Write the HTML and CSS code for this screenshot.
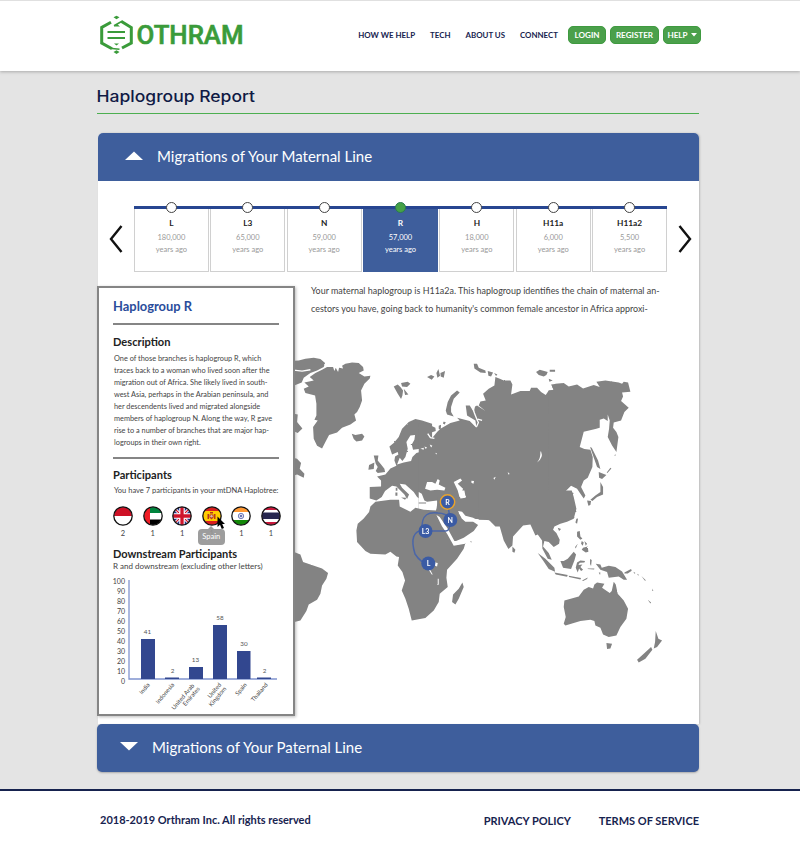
FILE: index.html
```html
<!DOCTYPE html>
<html lang="en">
<head>
<meta charset="utf-8">
<title>Haplogroup Report</title>
<link rel="stylesheet" href="styles.css">
</head>
<body>
<header class="top">
  <svg class="logo" width="146" height="40" viewBox="98 14 146 40">
    <g fill="none" stroke="#3a9b3a" stroke-width="3">
      <path d="M111 22.300L101.700 27.500V43L112 48.800"/>
      <path d="M121.500 21.500L131.300 27.500V43L122 48"/>
      <path d="M107.500 32H125M107.500 38H125" stroke-width="1.800"/>
      <path d="M114 25.800L122.500 21M119.500 49.300L112 48.500" stroke-width="1.600"/>
    </g>
    <path fill="#3a9b3a" d="M113.500 17.300L116.500 15.800 119.500 17.300 116.500 19.300ZM113.500 52L116.500 50.200 119.500 52 116.500 54ZM114 43.500h5l-2.500 2ZM114 26.500l3-2.500 3 2.500Z"/>
    <text class="logo-text" x="136.500" y="44" textLength="107" lengthAdjust="spacingAndGlyphs">OTHRAM</text>
  </svg>
  <nav class="nav">
    <a class="n1">HOW WE HELP</a><a class="n2">TECH</a><a class="n3">ABOUT US</a><a class="n4">CONNECT</a>
    <span class="btn b1">LOGIN</span><span class="btn b2">REGISTER</span><span class="btn b3">HELP <svg width="6" height="4"><path d="M0 0H6L3 3.500Z" fill="#fff"/></svg></span>
  </nav>
</header>
<main class="page">
  <h1 class="title"><svg width="170" height="24"><text x="-0.500" y="17" textLength="158.500" lengthAdjust="spacingAndGlyphs">Haplogroup Report</text></svg></h1>
  <section class="panel">
    <h2 class="bar"><svg width="18" height="9"><path d="M0 9L9 0.500 18 9Z" fill="#fff"/></svg>Migrations of Your Maternal Line</h2>
    <div class="timeline">
      <svg class="arrow" width="14" height="28"><path d="M12.500 1L2 14 12.500 27" fill="none" stroke="#111" stroke-width="2.400"/></svg>
      <ol class="steps">
        <li><i></i><b>L</b><span>180,000<br>years ago</span></li>
        <li><i></i><b>L3</b><span>65,000<br>years ago</span></li>
        <li><i></i><b>N</b><span>59,000<br>years ago</span></li>
        <li class="on"><i></i><b>R</b><span>57,000<br>years ago</span></li>
        <li><i></i><b>H</b><span>18,000<br>years ago</span></li>
        <li><i></i><b>H11a</b><span>6,000<br>years ago</span></li>
        <li><i></i><b>H11a2</b><span>5,500<br>years ago</span></li>
      </ol>
      <svg class="arrow" width="14" height="28"><path d="M1.500 1L12 14 1.500 27" fill="none" stroke="#111" stroke-width="2.400"/></svg>
    </div>
    <div class="content">
      <aside class="side">
        <h3 class="hap">Haplogroup R</h3>
        <h4 class="desc-h">Description</h4>
        <p class="desc">One of those branches is haplogroup R, which<br>traces back to a woman who lived soon after the<br>migration out of Africa. She likely lived in south-<br>west Asia, perhaps in the Arabian peninsula, and<br>her descendents lived and migrated alongside<br>members of haplogroup N. Along the way, R gave<br>rise to a number of branches that are major hap-<br>logroups in their own right.</p>
        <h4 class="part-h">Participants</h4>
        <p class="part">You have 7 participants in your mtDNA Haplotree:</p>
        <ul class="flags">
          <li><svg viewBox="0 0 20 20"><clipPath id="c"><circle cx="10" cy="10" r="9"/></clipPath><g clip-path="url(#c)"><path fill="#fff" d="M0 0H20V20H0Z"/><path fill="#ce1126" d="M0 0H20V10H0Z"/></g><circle class="ring" cx="10" cy="10" r="9.200"/></svg>2</li>
          <li><svg viewBox="0 0 20 20"><g clip-path="url(#c)"><path fill="#fff" d="M0 0H20V20H0Z"/><path fill="#00843d" d="M0 0H20V7H0Z"/><path d="M0 13.500H20V20H0Z"/><path fill="#ee1c25" d="M0 0H7V20H0Z"/></g><circle class="ring" cx="10" cy="10" r="9.200"/></svg>1</li>
          <li><svg viewBox="0 0 20 20"><g clip-path="url(#c)"><path fill="#26358c" d="M0 0H20V20H0Z"/><path stroke="#fff" stroke-width="3" d="M1 1L19 19M19 1L1 19"/><path stroke="#cf142b" stroke-width="1.200" d="M1 1L19 19M19 1L1 19"/><path stroke="#fff" stroke-width="5.500" d="M10 0V20M0 10H20"/><path stroke="#cf142b" stroke-width="3.300" d="M10 0V20M0 10H20"/></g><circle class="ring" cx="10" cy="10" r="9.200"/></svg>1</li>
          <li class="spain"><svg viewBox="0 0 20 20"><g clip-path="url(#c)"><path fill="#d81e1e" d="M0 0H20V20H0Z"/><path fill="#fc0" d="M0 5H20V15H0Z"/><path fill="#b5361f" d="M5.500 8h1.500v5H5.500zM12 8h1.500v5h-1.500zM8 6h3v1.500H8zM7.500 8.500h4v3l-2 2-2-2Z"/><circle cx="9.500" cy="10.300" r="1.200" fill="#d9b9b0"/></g><circle class="ring" cx="10" cy="10" r="9.200"/></svg>1<span class="tip">Spain</span><svg class="cursor" viewBox="0 0 8 14"><path d="M0.500 0.500V11L3 8.800 4.800 13 7 12 5.200 8H8Z"/></svg></li>
          <li><svg viewBox="0 0 20 20"><g clip-path="url(#c)"><path fill="#fff" d="M0 0H20V20H0Z"/><path fill="#f93" d="M0 0H20V6H0Z"/><path fill="#138808" d="M0 14H20V20H0Z"/></g><circle cx="10" cy="10" r="2.700" fill="#dde" stroke="#4250a0" stroke-width=".7"/><circle cx="10" cy="10" r="1" fill="#4250a0"/><circle class="ring" cx="10" cy="10" r="9.200"/></svg>1</li>
          <li><svg viewBox="0 0 20 20"><g clip-path="url(#c)"><path fill="#c8193c" d="M0 0H20V20H0Z"/><path fill="#fff" d="M0 4H20V16H0Z"/><path fill="#27274f" d="M0 6.500H20V13H0Z"/></g><circle class="ring" cx="10" cy="10" r="9.200"/></svg>1</li>
        </ul>
        <h4 class="down-h">Downstream Participants</h4>
        <p class="down">R and downstream (excluding other letters)</p>
        <svg class="chart" width="180" height="138" viewBox="110 574 180 138">
          <path fill="none" stroke="#8094cf" stroke-width="1.300" d="M129 581V680H277"/>
          <g fill="#32478f"><path d="M141 640h14v40h-14zM165 678.500h14v1.500h-14zM189 668h14v12h-14zM213 626h14v54h-14zM237 652h13.500v28h-13.500zM257 678.500h14v1.500h-14z"/></g>
          <g class="axis"><text x="125" y="585">100</text><text x="125" y="595">90</text><text x="125" y="605">80</text><text x="125" y="615">70</text><text x="125" y="625">60</text><text x="125" y="635">50</text><text x="125" y="645">40</text><text x="125" y="655">30</text><text x="125" y="665">20</text><text x="125" y="675">10</text><text x="125" y="685">0</text></g>
          <g class="vals"><text x="147.500" y="634.500">41</text><text x="172.500" y="673.500">2</text><text x="195.500" y="663">13</text><text x="220" y="621">58</text><text x="244" y="647">30</text><text x="264.500" y="673.500">2</text></g>
          <g class="cats">
            <text transform="translate(149 685) rotate(-50)">India</text>
            <text transform="translate(173.500 685) rotate(-50)">Indonesia</text>
            <text transform="translate(193.500 686) rotate(-50)">United Arab</text>
            <text transform="translate(199 689) rotate(-50)">Emirates</text>
            <text transform="translate(220.500 685) rotate(-50)">United</text>
            <text transform="translate(225.500 689) rotate(-50)">Kingdom</text>
            <text transform="translate(246 685) rotate(-50)">Spain</text>
            <text transform="translate(267 685) rotate(-50)">Thailand</text>
          </g>
        </svg>
      </aside>
      <div class="right">
        <p class="intro"><span>Your maternal haplogroup is H11a2a. This haplogroup identifies the chain of maternal an-</span><br><span>cestors you have, going back to humanity's common female ancestor in Africa approxi-</span></p>
        <svg class="map" width="404" height="330" viewBox="295 340 404 330">
          <defs><filter id="coast" x="0" y="0" width="100%" height="100%"><feTurbulence type="fractalNoise" baseFrequency="0.3" numOctaves="1" seed="4"/><feDisplacementMap in="SourceGraphic" scale="1.7" xChannelSelector="R" yChannelSelector="G"/></filter></defs>
          <g class="land" filter="url(#coast)">
            <g transform="translate(290.400 340.400) scale(.33333)">
              <path d="M0 62L25 60 45 55 70 52 90 56 104 68 100 80 80 90 60 98 40 112 34 126 0 140Z"/>
              <path class="sea-line" d="M10 89L35 92 60 88"/>
              <path d="M42 126L70 120 58 110 75 98 95 88 110 80 128 80 132 92 136 82 143 95 146 82 158 84 155 76 165 70 185 66 205 68 218 80 220 90 205 98 222 108 240 106 238 114 222 130 212 150 215 180 208 200 200 215 192 222 197 240 180 252 155 262 140 276 116 284 105 305 95 324 80 316 70 295 68 260 82 240 72 238 78 225 78 190 74 165 45 158 40 145 55 138Z"/>
              <path d="M0 218L22 222 20 245 36 264 22 278 0 268ZM0 350L20 355 32 368 28 385 42 400 40 412 20 402 0 408Z"/>
              <path d="M184 280L195 284 215 280 222 288 215 300 198 303 190 296Z"/>
              <path d="M310 138L322 132 330 140 338 150 336 165 332 176 322 160ZM332 128L352 124 360 130 350 140 335 138ZM340 145L354 162 344 164Z"/>
              <path d="M250 345L264 345 262 360 272 372 282 385 284 395 262 398 256 392 262 380 256 370ZM236 374L252 366 250 386 234 388Z"/>
              <path d="M425 250L425 450 400 455 388 460 392 478 380 470 370 455 345 432 328 430 335 442 356 462 350 476 342 462 318 438 305 436 284 452 274 470 258 480 238 474 238 440 272 438 272 420 260 408 285 402 300 384 318 376 312 360 314 348 324 342 322 335 305 342 297 318 310 308 325 290 335 265 355 245 375 236 395 240Z"/>
              <path d="M398 456L425 452V478L402 476ZM316 442h5v9h-5zM315 456h6v10h-6zM332 471l16 1-4 6z"/>
              <path class="sea" d="M345 350L352 325 348 305 360 285 374 284 372 298 364 312 368 328 390 325 412 320 400 332 378 338 366 350 362 362 340 366 320 372 328 352 336 362Z"/>
            </g>
            <g transform="translate(420.400 340.400) scale(.33333)">
              <path d="M-5 248L20 250 45 262 46 272 22 280 36 292 50 275 60 265 90 248 118 240 110 232 148 242 168 262 165 240 140 225 136 195 148 195 160 215 164 198 170 195 195 212 175 195 180 183 196 180 188 160 205 145 222 135 225 110 240 116 250 120 270 120 276 132 272 162 300 152 328 152 332 142 350 142 362 155 376 164 385 150 400 150 395 138 405 130 425 130V515H-5Z"/>
              <path class="sea" d="M14 445L20 425 35 425 45 430 52 416 58 420 55 432 75 442 72 450 50 448 30 450ZM100 425L120 414 125 420 112 430 128 445 124 455 137 468 134 476 118 472 112 450ZM-5 455L4 460 12 480 20 484 50 480 52 498 45 515H-5ZM362 333Q370 352 350 366 361 354 360 333ZM153 421l8 1-2 8-6-3zM219 413l7-4-4 9zM262 395l6 6-4 1zM0 325l10-3 0 6zM12 318l8 3-4 5zM28 312l8 4-4 5zM45 337l5 2-3 3z"/>
              <path class="sea-line" d="M156 198L162 218 170 238 174 246 168 260M172 236L185 240M22 280L30 292 42 294"/>
              <path d="M110 150L118 156 100 175 92 200 92 215 100 228 80 222 76 210 82 185 92 165ZM160 70L170 70 175 82 195 90 196 98 180 96 162 84ZM202 92L218 96 212 108 204 106ZM347 95L358 88 382 95 378 104 370 108 355 104ZM388 88h16v6h-16zM385 115l12 5-10 4zM20 110l12-6 10 4-8 10zM48 98l6-12 5 20-8 6zM60 98l14-6-4 20-9-4zM55 256l7-3-1 15-6-3zM69 244l7 1-3 7-5-2zM221 98l10 4-4 5z"/>
            </g>
            <g transform="translate(550.400 340.400) scale(.33333)">
              <path d="M-5 150L10 148 2 132 40 128 55 138 80 132 98 144 130 134 148 140 138 124 165 120 205 126 215 130 220 124 233 126 240 154 215 156 218 168 212 182 235 202 222 215 212 240 190 246 188 262 198 275 204 290 198 335 185 315 172 290 176 265 178 240 172 222 172 242 160 234 148 238 148 262 135 266 100 274 88 320 102 326 120 328 127 350 126 380 112 412 100 420 92 440 105 465 100 474 90 460 80 445 62 436 46 452 70 458 62 470 72 490 78 515H-5Z"/>
              <path d="M119 320L124 322 143 360 150 386 140 380ZM145 395L168 404 155 416 146 412ZM180 382l3 2-12 14-2-2zM150 425L158 440 158 462 140 470 126 482 120 478 135 465 150 455ZM110 480l12 2-2 12-6 2zM192 345l3-4 0 6z"/>
            </g>
            <g transform="translate(290.400 490.400) scale(.33333)">
              <path d="M0 180L30 192 38 215 60 222 95 234 113 248 108 265 95 285 90 310 80 328 55 342 48 362 30 390 0 398Z"/>
              <path d="M240 48L255 34 300 28 326 28 328 48 360 64 375 52 400 58 438 60 445 78 460 105 475 130 488 155 492 164 525 158 520 175 500 205 470 238 468 262 472 290 448 310 445 335 430 360 405 383 364 390 355 355 345 325 334 300 344 270 336 245 322 225 326 200 318 198 300 184 285 192 240 190 225 182 200 155 198 120 202 100 220 84 236 65Z"/>
              <path d="M443 20H605V90L560 86 535 84 520 78 508 64 505 68 515 82 525 92 545 92 563 104 550 122 520 142 490 155 480 140 465 115 440 78 438 58Z"/>
              <path class="sea" d="M438 74L448 80 472 115 492 152 525 152 524 160 490 166 470 130 455 108ZM503 62L515 64 525 76 548 82 562 90 545 94 525 94 514 84ZM504 0H522L526 22 510 24ZM434 216l8 2-2 10-6-2zM442 265h3v18h-3zM415 238l4 0 8 14-3 0z"/>
              <path d="M516 276L520 290 505 325 495 342 485 335 488 312 505 295ZM385 36l22 0 0 3-22 0zM538 153l6 0-1 3z"/>
            </g>
            <g transform="translate(480.400 490.400) scale(.33333)">
              <path d="M-5 0H274L280 20 288 55 280 85 260 94 240 100 222 108 218 118 228 128 238 148 236 160 220 170 205 155 192 152 188 168 205 188 214 208 202 205 186 175 185 150 172 132 165 135 150 102 128 105 98 138 96 165 84 176 70 150 58 108 45 108 25 88-5 88Z"/>
              <path d="M96 168L105 178 102 187 96 184ZM232 112L242 116 236 122ZM288 85L293 84 290 100 285 96ZM172 188L195 205 222 232 224 244 205 236 188 210ZM222 246L262 254 260 259 226 252ZM265 256L302 263 300 267 266 260ZM305 270L322 261 320 266 308 272ZM240 212L250 212 262 205 280 184 287 192 282 210 272 236 248 232ZM290 216L300 210 314 212 312 216 298 217 294 224 306 222 300 230 308 238 302 242 296 234 292 246 286 232ZM290 124L298 122 300 138 306 144 300 148 290 138ZM308 172L322 168 324 184 316 186 304 178ZM304 152l6 4-3 10-5-6zM312 152l8 8-4 6zM284 170l8-10-6 14zM329 206l5 3-2 18-3-6zM322 234l20 0-1 3-19-1zM355 246l5 0-1 8z"/>
              <path d="M346 220L360 222 364 232 385 226 405 230 425 243 440 268 430 268 415 258 385 262 380 245 360 238ZM432 246l20-10 2 5-12 8-10 0zM459 244l6 4-3 2zM470 250l6 4-3 1zM483 257l14 13-4 0zM515 294l4 8-3 0zM502 328l10 8-2 3z"/>
              <path d="M252 330L295 318 310 298 325 290 338 294 342 282 350 276 372 280 365 292 388 308 394 302 400 274 406 282 412 310 430 330 443 355 438 385 420 410 408 435 385 440 368 432 360 412 345 405 342 392 330 388 300 392 255 405 250 400 256 380 250 350ZM378 458L395 460 390 474 380 476ZM526 422L534 445 545 450 530 470 520 474 524 455ZM512 470L516 478 495 505 475 516 470 508 490 490Z"/>
            </g>
          </g>
          <path class="route" d="M427 563Q421 563 415 554 408 531 424 530M422 530C421 513 430 512 438 513 444 513 448 516 450 519M427 531H446Q450 531 450 521M447.500 502L450 519"/>
          <g class="nodes">
            <circle cx="447.500" cy="502" r="7.200" class="hot"/><circle cx="450.300" cy="520" r="7"/><circle cx="425.500" cy="531" r="7"/><circle cx="428.300" cy="563.500" r="7"/>
            <text x="447.500" y="504.600">R</text><text x="450.300" y="522.700">N</text><text x="425.500" y="533.700">L3</text><text x="428.500" y="566">L</text>
          </g>
        </svg>
      </div>
    </div>
  </section>
  <h2 class="bar bar2"><svg width="18" height="9"><path d="M0 0H18L9 8.500Z" fill="#fff"/></svg>Migrations of Your Paternal Line</h2>
</main>
<footer class="foot"><span class="copy">2018-2019 Orthram Inc. All rights reserved</span><span class="pp">PRIVACY POLICY</span><span class="pp">TERMS OF SERVICE</span></footer>
</body>
</html>
```
FILE: styles.css
```css
* { box-sizing: border-box; margin: 0; padding: 0; }
body { width: 800px; height: 850px; overflow: hidden; background: #e4e4e4; font-family: Lato, "Liberation Sans", sans-serif; color: #444; }
svg { display: block; flex: none; }
ol, ul { list-style: none; }
.top { height: 71px; background: #fff; border-top: 1px solid #e0e0e0; box-shadow: 0 1px 3px #aaa; padding: 13px 99px 0 98px; display: flex; justify-content: space-between; }
.logo-text { font: 500 25px Roboto, sans-serif; fill: #3a9b3a; stroke: #3a9b3a; stroke-width: .6px; }
.nav { display: flex; align-items: center; height: 18px; margin-top: 12px; font-size: 7.900px; font-weight: 700; color: #17234f; white-space: nowrap; }
.nav a { margin-right: 15px; }
.nav .n4 { margin-right: 10px; }
.btn { height: 18px; line-height: 16px; font-size: 8.100px; background: #4ba04b; color: #fff; border-radius: 5px; text-align: center; border: 1px solid #3f9a40; margin-right: 4px; }
.b1 { width: 38px; }
.b2 { width: 49px; }
.b3 { width: 38px; margin-right: 0; display: flex; align-items: center; justify-content: center; gap: 3px; }
.page { width: 602px; margin-left: 97px; height: 718px; padding-top: 14px; }
.title { height: 29px; border-bottom: 1px solid #4caf50; margin-bottom: 19px; }
.title text { font: 500 15.500px Inter, sans-serif; fill: #101a44; }
.bar { height: 48px; background: #3e5e9c; color: #fff; font-size: 15px; font-weight: 400; display: flex; align-items: center; padding: 0 0 3px 27px; border-radius: 5px 5px 0 0; gap: 14px; white-space: nowrap; }
.panel { margin-left: 1px; width: 601px; height: 591px; background: #fff; border-radius: 5px 5px 0 0; box-shadow: 1px 0 2px #bbb; }
.bar2 { border-radius: 5px; box-shadow: 0 1px 2px #aaa; padding-left: 23px; }
.timeline { display: flex; padding: 25px 0 0 11px; height: 105px; }
.arrow { margin-top: 19px; }
.steps { display: grid; grid-template-columns: repeat(7, 1fr); column-gap: 1.500px; width: 533px; margin: 0 11px; border-top: 3px solid #274691; height: 66px; }
.steps li { border: 1.500px solid #d0d0d0; border-top: 0; display: flex; flex-direction: column; align-items: center; text-align: center; font-size: 7.500px; line-height: 12px; color: #999; }
.steps i { width: 11px; height: 11px; flex: none; border: 1px solid #444; border-radius: 50%; background: #fff; margin-top: -7px; }
.steps b { font-size: 8.300px; color: #222; line-height: 12px; margin: 4px 0 3px; }
.steps .on { background: #3e5e9c; border-color: #3e5e9c; color: #fff; }
.steps .on b { color: #fff; }
.steps .on i { background: #46a147; border-color: #2a7b50; }
.content { display: flex; margin-left: -1px; }
.side { width: 198px; height: 430px; border: 2px solid #858585; background: #fff; box-shadow: 1px 1px 3px #bbb; padding: 1px 14px 0; white-space: nowrap; }
.hap { font-size: 12.900px; font-weight: 700; color: #2a4c9b; height: 36px; line-height: 34px; border-bottom: 2px solid #858585; }
.side h4 { font-size: 11.100px; color: #222; line-height: 14px; }
.side .desc-h { margin-top: 10px; }
.desc { font-size: 7.350px; line-height: 12px; margin-top: 4px; height: 106px; border-bottom: 2px solid #858585; padding-left: 1px; }
.side .part-h { margin-top: 9px; }
.part { font-size: 7.500px; line-height: 12px; margin: 3px 0 9px 1px; }
.flags { display: flex; justify-content: space-between; height: 41px; width: 168px; }
.flags li { position: relative; width: 20px; text-align: center; font-size: 7.500px; line-height: 15px; color: #444; }
.flags li > svg { width: 20px; height: 20px; }
.ring { fill: none; stroke: #111; stroke-width: 1.300; }
.tip { position: absolute; left: -4px; top: 23px; width: 27px; height: 16px; background: rgba(150, 150, 150, .93); color: #fff; border-radius: 4px; line-height: 16px; font-size: 7.500px; }
.tip::before { content: ""; position: absolute; left: 10px; top: -3px; border: 3px solid transparent; border-top: 0; border-bottom-color: #9d9d9d; }
.flags li > .cursor { position: absolute; left: 15px; top: 10px; width: 8px; height: 14px; }
.side .down-h { margin-top: 0; font-size: 11px; }
.down { font-size: 8px; line-height: 10px; }
.chart { margin: 2px 0 0 -3px; }
.axis text { font-size: 7px; text-anchor: end; fill: #444; }
.vals text { font-size: 6.300px; text-anchor: middle; fill: #555; }
.cats text { font-size: 6px; text-anchor: end; fill: #444; dominant-baseline: middle; }
.intro { font-size: 8.950px; line-height: 18px; height: 63px; padding: 5px 0 0 16px; margin-top: -9px; white-space: nowrap; }
.land { fill: #838383; }
.sea { fill: #fff; }
.sea-line { fill: none; stroke: #fff; stroke-width: 4; }
.route { fill: none; stroke: #4b66a8; stroke-width: 1.500; }
.nodes circle { fill: #3b5ba4; }
.nodes .hot { stroke: #e8a32d; stroke-width: 1.500; }
.nodes text { fill: #fff; font-size: 7px; font-weight: 700; text-anchor: middle; }
.foot { height: 61px; background: #fff; border-top: 2px solid #16224e; display: flex; justify-content: space-between; padding: 22px 101px 0 100px; font-size: 11px; font-weight: 700; color: #17234f; white-space: nowrap; }
.copy { width: 356px; }
.pp { padding-top: 1px; }
```
